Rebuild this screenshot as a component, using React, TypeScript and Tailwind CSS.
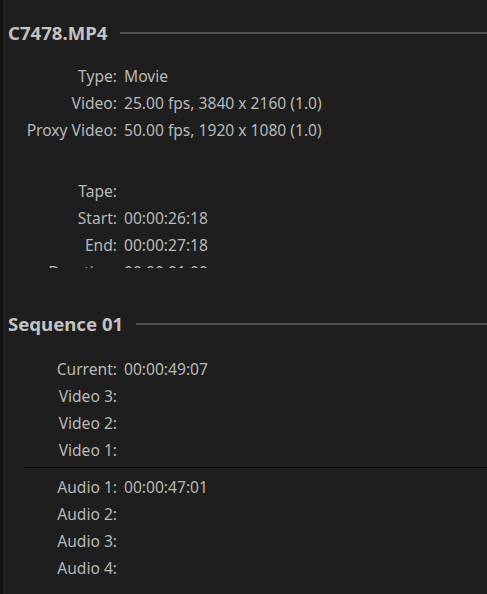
import React from "react";

const font = { fontFamily: '"Noto Sans", "Open Sans", sans-serif' };

function Row({ label, value }: { label: string; value?: string }) {
  return (
    <div className="flex h-[27px] items-center">
      <div className="w-[114px] shrink-0 text-right">{label}</div>
      <div className="pl-[7px] whitespace-nowrap">{value ?? ""}</div>
    </div>
  );
}

function Header({ title }: { title: string }) {
  return (
    <div className="flex h-[30px] items-center pl-[5px]">
      <div className="text-[18.6px] font-bold text-[#c2c2c2] whitespace-nowrap">{title}</div>
      <div className="ml-[13px] h-[2px] flex-1 bg-[#4f4f4f]" />
    </div>
  );
}

export default function App() {
  return (
    <div
      className="flex h-[594px] w-[487px] overflow-hidden bg-[#1e1e1e] text-[15.6px] text-[#b8b8b8]"
      style={font}
    >
      <div className="w-[3px] shrink-0 bg-[#121212]" />
      <div className="flex min-w-0 flex-1 flex-col">
        <div className="h-[268px] overflow-hidden pt-[18px]">
          <Header title="C7478.MP4" />
          <div className="pt-[15px]">
            <Row label="Type:" value="Movie" />
            <Row label="Video:" value="25.00 fps, 3840 x 2160 (1.0)" />
            <Row label="Proxy Video:" value="50.00 fps, 1920 x 1080 (1.0)" />
            <div className="h-[34px]" />
            <Row label="Tape:" />
            <Row label="Start:" value="00:00:26:18" />
            <Row label="End:" value="00:00:27:18" />
            <Row label="Duration:" value="00:00:01:00" />
          </div>
        </div>
        <div className="pt-[41px]">
          <Header title="Sequence 01" />
          <div className="pt-[17px]">
            <Row label="Current:" value="00:00:49:07" />
            <Row label="Video 3:" />
            <Row label="Video 2:" />
            <Row label="Video 1:" />
            <div className="ml-[21px] mt-[3px] mb-[6px] h-[1px] bg-[#0e0e0e]" />
            <Row label="Audio 1:" value="00:00:47:01" />
            <Row label="Audio 2:" />
            <Row label="Audio 3:" />
            <Row label="Audio 4:" />
          </div>
        </div>
      </div>
    </div>
  );
}
